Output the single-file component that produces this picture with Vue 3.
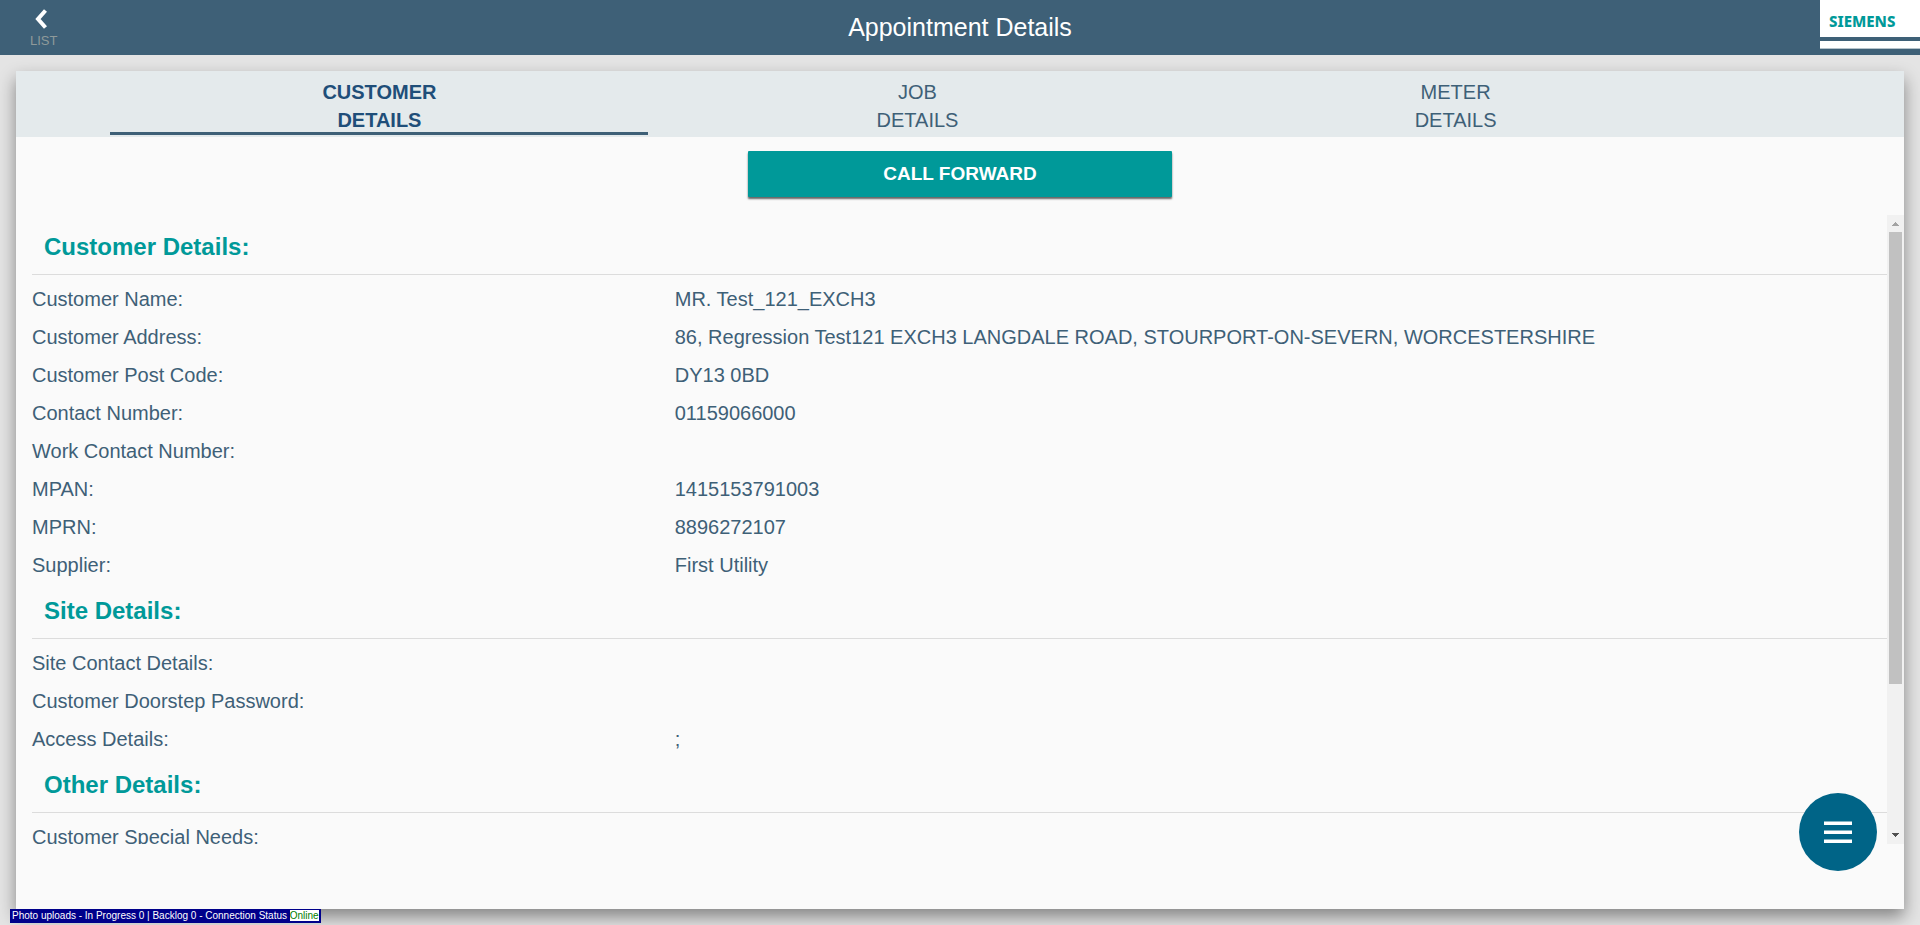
<script setup>
const tabs = [
  { first: 'CUSTOMER', second: 'DETAILS', active: true },
  { first: 'JOB', second: 'DETAILS', active: false },
  { first: 'METER', second: 'DETAILS', active: false },
]

const sections = [
  {
    title: 'Customer Details:',
    rows: [
      ['Customer Name:', 'MR. Test_121_EXCH3'],
      ['Customer Address:', '86, Regression Test121 EXCH3 LANGDALE ROAD, STOURPORT-ON-SEVERN, WORCESTERSHIRE'],
      ['Customer Post Code:', 'DY13 0BD'],
      ['Contact Number:', '01159066000'],
      ['Work Contact Number:', ''],
      ['MPAN:', '1415153791003'],
      ['MPRN:', '8896272107'],
      ['Supplier:', 'First Utility'],
    ],
  },
  {
    title: 'Site Details:',
    rows: [
      ['Site Contact Details:', ''],
      ['Customer Doorstep Password:', ''],
      ['Access Details:', ';'],
    ],
  },
  {
    title: 'Other Details:',
    rows: [['Customer Special Needs:', '']],
  },
]
</script>

<template>
  <div class="page">
    <header class="topbar">
      <button class="back" type="button">
        <svg width="14" height="22" viewBox="0 0 14 22" aria-hidden="true">
          <path d="M11.500 2.500 4 11l7.500 8.500" fill="none" stroke="#fff" stroke-width="4" />
        </svg>
        <span>LIST</span>
      </button>
      <h1>Appointment Details</h1>
      <div class="brand">
        <div class="brand-name">SIEMENS</div>
        <div class="brand-strip"></div>
      </div>
    </header>

    <main class="card">
      <nav class="tabs">
        <button
          v-for="tab in tabs"
          :key="tab.first"
          type="button"
          class="tab"
          :class="{ active: tab.active }"
        >
          <span>{{ tab.first }}</span>
          <span>{{ tab.second }}</span>
        </button>
      </nav>

      <button class="call" type="button">CALL FORWARD</button>

      <div class="viewport">
        <div class="content">
          <section v-for="section in sections" :key="section.title">
            <h2>{{ section.title }}</h2>
            <dl>
              <div v-for="row in section.rows" :key="row[0]" class="row">
                <dt>{{ row[0] }}</dt>
                <dd>{{ row[1] }}</dd>
              </div>
            </dl>
          </section>
        </div>
        <div class="scrollbar" aria-hidden="true">
          <svg width="17" height="17" viewBox="0 0 17 17" shape-rendering="crispEdges">
            <path d="M8 7h1v1h1v1h1v1h1v1H5v-1h1V9h1V8h1z" fill="#a3a3a3" />
          </svg>
          <div class="track"><div class="thumb"></div></div>
          <svg width="17" height="17" viewBox="0 0 17 17" shape-rendering="crispEdges">
            <path d="M5 6h7v1h-1v1h-1v1H9v1H8V9H7V8H6V7H5z" fill="#505050" />
          </svg>
        </div>
      </div>
    </main>

    <button class="fab" type="button" aria-label="Menu">
      <svg width="28" height="22" viewBox="0 0 28 22" aria-hidden="true">
        <path d="M0 .5h28v3.500H0zM0 9.500h28V13H0zM0 18.500h28V22H0z" fill="#fff" />
      </svg>
    </button>

    <footer class="status">
      Photo uploads - In Progress 0 | Backlog 0 - Connection Status <span>Online</span>
    </footer>
  </div>
</template>

<style>
body {
  margin: 0;
  background: #e4e4e4;
}
</style>

<style scoped>
.page {
  box-sizing: border-box;
  display: flex;
  flex-direction: column;
  height: 100vh;
  padding-bottom: 16px;
  overflow: hidden;
  font-family: "Liberation Sans", Arial, sans-serif;
  color: #3e6077;
}

button {
  margin: 0;
  padding: 0;
  border: 0;
  background: none;
  color: inherit;
  font: inherit;
  cursor: pointer;
}

.topbar {
  display: grid;
  grid-template-columns: 1fr auto 1fr;
  height: 55px;
  flex: none;
  background: #3e6077;
}

.back {
  display: flex;
  flex-direction: column;
  justify-self: start;
  padding: 8px 0 0 30px;
}

.back svg {
  margin-left: 4px;
}

.back span {
  color: #8f9a9a;
  font-size: 13px;
  line-height: 22px;
}

h1 {
  margin: 0;
  color: #fff;
  font-size: 25px;
  font-weight: 400;
  line-height: 55px;
}

.brand {
  justify-self: end;
  width: 100px;
}

.brand-name {
  box-sizing: border-box;
  height: 37px;
  padding-left: 9px;
  background: #fff;
  color: #099;
  font-family: "Noto Sans", "Open Sans", sans-serif;
  font-size: 15px;
  font-weight: 800;
  line-height: 43px;
}

.brand-strip {
  height: 7px;
  margin-top: 4px;
  border-bottom: 1px solid #b5c3cb;
  background: #fff;
}

.card {
  display: flex;
  flex-direction: column;
  flex: 1;
  min-height: 0;
  margin: 16px 16px 0;
  background: #fafafa;
  box-shadow: 0 8px 16px rgba(0, 0, 0, 0.42);
}

.tabs {
  display: flex;
  flex: none;
  height: 66px;
  padding-left: 5%;
  background: #e4eaec;
}

.tab {
  box-sizing: border-box;
  display: flex;
  flex-direction: column;
  align-items: center;
  width: 30%;
  height: 64px;
  padding-top: 7px;
  border-bottom: 3px solid transparent;
  font-size: 20px;
  line-height: 28px;
}

.tab.active {
  border-color: #3e6077;
  color: #1f4e79;
  font-weight: 700;
}

.call {
  flex: none;
  align-self: center;
  width: 22.5%;
  height: 46px;
  margin: 14px 0 18px;
  border-radius: 1px;
  background: #099;
  box-shadow: 0 2px 2px rgba(0, 0, 0, 0.6);
  color: #fff;
  font-size: 19px;
  font-weight: 700;
}

.viewport {
  display: flex;
  flex: 1;
  min-height: 0;
  margin-bottom: 65px;
}

.content {
  flex: 1;
  min-width: 0;
  padding: 5px 0 0 16px;
  overflow-y: auto;
  scrollbar-width: none;
}

h2 {
  margin: 0;
  padding-left: 12px;
  border-bottom: 1px solid #dcdcdc;
  color: #099;
  font-size: 24px;
  font-weight: 700;
  line-height: 54px;
}

dl {
  margin: 0;
  padding-top: 5px;
}

.row {
  display: flex;
  font-size: 20px;
  line-height: 38px;
}

dt {
  flex: none;
  width: 34.65%;
}

dd {
  margin: 0;
}

.scrollbar {
  display: flex;
  flex-direction: column;
  width: 17px;
  background: #f1f1f1;
}

.scrollbar svg {
  display: block;
  flex: none;
}

.track {
  flex: 1;
  padding: 0 2px;
}

.thumb {
  height: 76%;
  background: #c1c1c1;
}

.fab {
  position: fixed;
  right: 43px;
  bottom: 54px;
  display: flex;
  align-items: center;
  justify-content: center;
  width: 78px;
  height: 78px;
  border-radius: 50%;
  background: #006487;
}

.status {
  position: fixed;
  bottom: 2px;
  left: 10px;
  padding: 1px 2px;
  background: #00008b;
  color: #fff;
  font-size: 10px;
  line-height: 12px;
}

.status span {
  display: inline-block;
  background: #fff;
  color: #008000;
  line-height: 11px;
}
</style>
